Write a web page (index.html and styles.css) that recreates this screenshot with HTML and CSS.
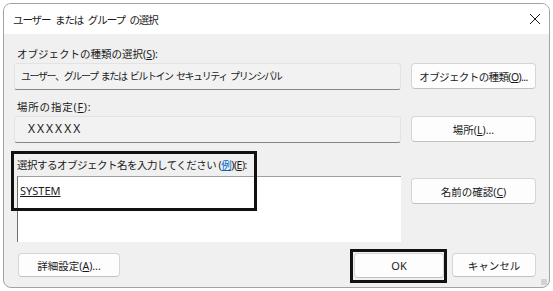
FILE: index.html
```html
<!DOCTYPE html>
<html lang="ja">
<head>
    <meta charset="UTF-8">
    <title>ユーザー または グループ の選択</title>
    <link rel="stylesheet" href="styles.css">
</head>
<body>
    <div class="window">
        <div class="titlebar">
            <span class="title">ユーザー または グループ の選択</span>
            <svg class="close" width="12" height="12" viewBox="0 0 12 12">
                <path d="M1 1 L11 11 M11 1 L1 11" stroke="#1a1a1a" stroke-width="1" fill="none"/>
            </svg>
        </div>
        <div class="content">
            <div class="label">オブジェクトの種類の選択(<u>S</u>):</div>
            <div class="row">
                <div class="field">ユーザー、グループ または ビルトイン セキュリティ プリンシパル</div>
                <button class="btn side tight">オブジェクトの種類(<u>O</u>)...</button>
            </div>

            <div class="label wide">場所の指定(<u>F</u>):</div>
            <div class="row row-loc">
                <div class="field loc">XXXXXX</div>
                <button class="btn side">場所(<u>L</u>)...</button>
            </div>

            <div class="label narrow">選択するオブジェクト名を入力してください (<span class="link">例</span>)(<u>E</u>):</div>
            <div class="row names-row">
                <div class="names"><u>SYSTEM</u></div>
                <button class="btn side">名前の確認(<u>C</u>)</button>
            </div>

            <div class="footer">
                <button class="btn adv">詳細設定(<u>A</u>)...</button>
                <div class="spacer"></div>
                <button class="btn ok">OK</button>
                <button class="btn cancel">キャンセル</button>
            </div>
        </div>

        <!-- highlight boxes drawn over the dialog -->
        <div class="mark mark-names"></div>
        <div class="mark mark-ok"></div>
        <div class="grip"></div>
    </div>
</body>
</html>
```

FILE: styles.css
```css
body {
    margin: 0;
    background-color: #fff;
    font-family: 'Noto Sans', 'Noto Sans CJK JP', sans-serif;
    font-size: 10.5px;
    color: #1a1a1a;
}
.window {
    position: relative;
    margin: 3px 0 0 3px;
    width: 545px;
    height: 283px;
    border: 1px solid #a3a3a3;
    border-radius: 8px;
    background-color: #f0f0f0;
    overflow: hidden;
}
.titlebar {
    display: flex;
    align-items: center;
    height: 30px;
    padding: 0 8px 0 9px;
    background-color: #fff;
}
.title {
    flex: 1;
    letter-spacing: -1.1px;
    word-spacing: 3px;
}
.content {
    padding: 12px 13px 0 10px;
}
.label {
    height: 17px;
    line-height: 17px;
    padding-left: 3px;
    white-space: nowrap;
}
.label.wide {
    letter-spacing: 0.8px;
}
.label.narrow {
    letter-spacing: -0.5px;
}
.row {
    display: flex;
    gap: 10px;
    margin-bottom: 9px;
}
.row-loc {
    margin-bottom: 14px;
}
.field {
    box-sizing: border-box;
    width: 387px;
    height: 27px;
    line-height: 24px;
    padding-left: 6px;
    font-size: 10px;
    background-color: #f2f2f2;
    border: 1px solid #e3e3e3;
    border-bottom: 1px solid #868686;
    border-radius: 3px;
    white-space: nowrap;
    letter-spacing: -1.4px;
    word-spacing: 2px;
}
.field.loc {
    padding-left: 13px;
    font-size: 12px;
    letter-spacing: 2px;
}
.btn {
    box-sizing: border-box;
    font: inherit;
    color: #1a1a1a;
    background-color: #fdfdfd;
    border: 1px solid #d5d5d5;
    border-bottom-color: #c2c2c2;
    border-radius: 4px;
    padding: 0;
    white-space: nowrap;
}
.btn.tight {
    letter-spacing: -0.6px;
}
.side {
    width: 125px;
    height: 26px;
}
.names-row {
    align-items: flex-start;
    margin-top: 2px;
    margin-bottom: 11px;
}
.names {
    box-sizing: border-box;
    width: 384px;
    height: 66px;
    margin-left: 3px;
    padding: 6px 0 0 2px;
    font-size: 11px;
    background-color: #fff;
    border-top: 1px solid #a0a0a0;
    border-left: 1px solid #6e6e6e;
}
.names-row .btn {
    margin-top: 2px;
}
.link {
    color: #0066cc;
    text-decoration: underline;
}
.footer {
    display: flex;
    gap: 8px;
    padding-left: 4px;
}
.spacer {
    flex: 1;
}
.adv {
    width: 102px;
    height: 24px;
}
.ok {
    width: 90px;
    height: 25px;
    font-size: 11px;
}
.cancel {
    width: 84px;
    height: 24px;
}
.mark {
    position: absolute;
    box-sizing: border-box;
    border: 3px solid #111;
}
.mark-names {
    left: 7px;
    top: 147px;
    width: 246px;
    height: 60px;
}
.mark-ok {
    left: 346px;
    top: 245px;
    width: 97px;
    height: 34px;
}
.grip {
    position: absolute;
    right: 2px;
    bottom: 2px;
    width: 6px;
    height: 6px;
    background-image: radial-gradient(circle, #b0b0b0 0.6px, transparent 0.8px);
    background-size: 2px 2px;
}
```
